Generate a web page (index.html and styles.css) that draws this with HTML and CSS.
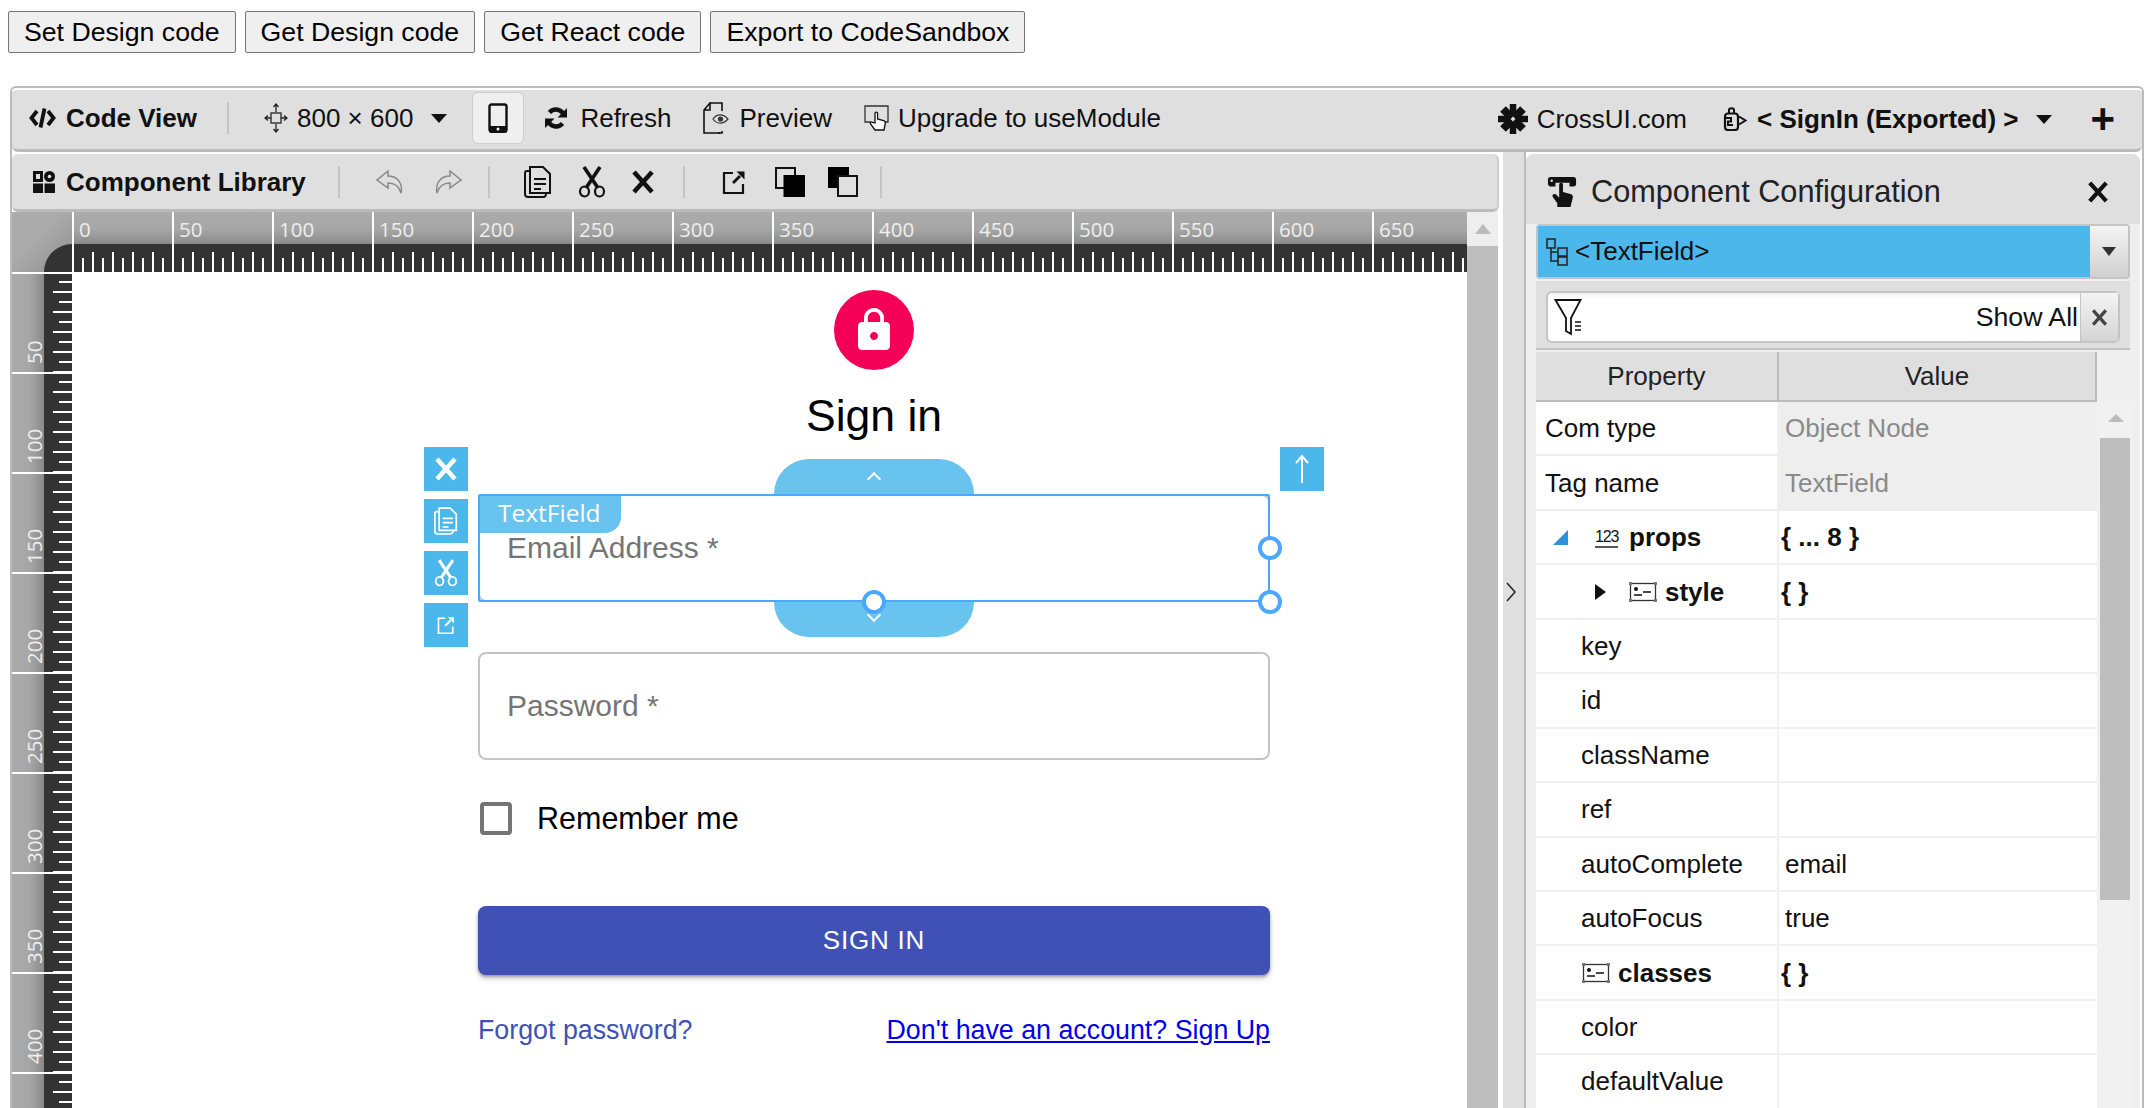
FILE: index.html
```html
<!DOCTYPE html>
<html lang="en">
<head>
    <meta charset="UTF-8">
    <title>CrossUI Builder</title>
    <link rel="stylesheet" href="styles.css">
</head>
<body>
    <svg class="sprite" xmlns="http://www.w3.org/2000/svg">
        <symbol id="i-code" viewBox="0 0 27 24"><path d="M8 5 2.500 12 8 19M19 5l5.500 7-5.500 7M15.500 2.500l-4 19" fill="none" stroke="currentColor" stroke-width="3.800"/></symbol>
        <symbol id="i-move" viewBox="0 0 24 30"><path d="M12 1v8M12 21v8M1 15h6M17 15h6M9.500 4 12 1l2.500 3M9.500 26l2.500 3 2.500-3M4 12.500 1 15l3 2.500M20 12.500l3 2.500-3 2.500" fill="none" stroke="#222" stroke-width="1.300"/><rect x="7" y="10" width="10" height="10" fill="none" stroke="#222" stroke-width="1.300"/></symbol>
        <symbol id="i-phone" viewBox="0 0 20 30"><rect x="1.500" y="1.500" width="17" height="27" rx="2" fill="none" stroke="#111" stroke-width="2.400"/><path d="M1 23h18v5a2 2 0 0 1-2 2H3a2 2 0 0 1-2-2z" fill="#111"/><circle cx="10" cy="26" r="1.500" fill="#fff"/></symbol>
        <symbol id="i-refresh" viewBox="0 0 24 24"><path d="M20 9.500A8.500 8.500 0 0 0 5.500 6.500M4 14.500a8.500 8.500 0 0 0 14.500 3" fill="none" stroke="#111" stroke-width="4.400"/><path d="M23 2v9.500h-9.500zM1 22v-9.500h9.500z" fill="#111"/></symbol>
        <symbol id="i-preview" viewBox="0 0 28 32"><path d="M8 1h12v8M18 31H2V8l6-7v7H2" fill="none" stroke="#111" stroke-width="1.600"/><path d="M20 29v2h-4" fill="none" stroke="#111" stroke-width="1.600"/><path d="M11 17c4-5.500 10-5.500 15 0-5 5.500-11 5.500-15 0z" fill="none" stroke="#333" stroke-width="1.200"/><circle cx="18.500" cy="17" r="2.600" fill="#333"/></symbol>
        <symbol id="i-upgrade" viewBox="0 0 26 26"><path d="M7 17H1V1h23v16h-4" fill="none" stroke="#333" stroke-width="1.300"/><path d="M11 18V8.500a1.300 1.300 0 0 1 2.600 0V14l6 1.500c1.500.5 2 1.500 1.700 3L20 25H11l-4.500-6c-.8-1.500 1-2.500 2-1.500z" fill="#fff" stroke="#111" stroke-width="1.300"/></symbol>
        <symbol id="i-cross" viewBox="0 0 32 32"><g stroke="#111" fill="none"><path d="M16 1v30M1 16h30" stroke-width="6.500"/><path d="M6 6l20 20M26 6 6 26" stroke-width="8"/></g><path d="M16 13.500l2.500 2.500-2.500 2.500-2.500-2.500z" fill="#dfdfdf"/></symbol>
        <symbol id="i-bag" viewBox="0 0 24 24"><path d="M2 10c0-2 1-3.500 3-3.500h7c2 0 3 1.500 3 3.500v10c0 2-1 3-3 3H5c-2 0-3-1-3-3z" fill="none" stroke="#111" stroke-width="2.200"/><path d="M6 6.500V3c0-2.500 5-2.500 5 0v3.500" fill="none" stroke="#111" stroke-width="2"/><path d="M16 9.500l6.500 4-6.500 4M3 11h5v3.500H5V18h5" fill="none" stroke="#111" stroke-width="2"/></symbol>
        <symbol id="i-lib" viewBox="0 0 24 24"><path d="M1 1h10v11H1zM1 13.500h10V23H1zM12.500 13.500H23V23H12.500z" fill="#111"/><rect x="4" y="4" width="4" height="5" fill="#dfdfdf"/><circle cx="17.500" cy="6.500" r="5.500" fill="#111"/><circle cx="17.500" cy="6.500" r="1.800" fill="#dfdfdf"/></symbol>
        <symbol id="i-undo" viewBox="0 0 30 26"><path d="M13 2 2 11l11 8v-5c6 0 11 3 13 10 2-9-3-17-13-17z" fill="none" stroke="#888" stroke-width="1.500"/></symbol>
        <symbol id="i-redo" viewBox="0 0 30 26"><path d="M17 2l11 9-11 8v-5c-6 0-11 3-13 10-2-9 3-17 13-17z" fill="none" stroke="#888" stroke-width="1.500"/></symbol>
        <symbol id="i-paste" viewBox="0 0 28 32"><path d="M6 5H3a2 2 0 0 0-2 2v21a3 3 0 0 0 3 3h15c2 0 3-1 3-3" fill="none" stroke="currentColor" stroke-width="2"/><path d="M6 1h13l7 7v19H6z" fill="none" stroke="currentColor" stroke-width="2"/><path d="M10 13h12M10 18h12M10 23h7" stroke="currentColor" stroke-width="2"/></symbol>
        <symbol id="i-cut" viewBox="0 0 28 32"><path d="M6 1l14 21M22 1 8 22" fill="none" stroke="currentColor" stroke-width="3.600"/><ellipse cx="6.500" cy="25.500" rx="4.500" ry="5" fill="none" stroke="currentColor" stroke-width="2.200"/><ellipse cx="21.500" cy="25.500" rx="4.500" ry="5" fill="none" stroke="currentColor" stroke-width="2.200"/></symbol>
        <symbol id="i-x" viewBox="0 0 24 24"><path d="M3 2l18 20M21 2 3 22" fill="none" stroke="currentColor" stroke-width="4.600"/></symbol>
        <symbol id="i-open" viewBox="0 0 24 24"><path d="M11 3H2v20h19v-9" fill="none" stroke="currentColor" stroke-width="2.200"/><path d="M11 13l7-7" stroke="currentColor" stroke-width="2.800"/><path d="M14.500 1.500h8v8z" fill="currentColor"/></symbol>
        <symbol id="i-front" viewBox="0 0 30 30"><rect x="1" y="1" width="19" height="20" fill="none" stroke="#111" stroke-width="2"/><rect x="8.500" y="8" width="21.500" height="22" fill="#000"/></symbol>
        <symbol id="i-back" viewBox="0 0 30 30"><rect x="0" y="0" width="21" height="21" fill="#000"/><rect x="10" y="9" width="19" height="20" fill="#dfdfdf" stroke="#111" stroke-width="2"/></symbol>
        <symbol id="i-tool" viewBox="0 0 32 32"><path d="M1 3c0-2 1-3 3-3h24c2 0 3 1 3 3v5c0 1-1 2-3 2h-4V6H9v4H4c-2 0-3-1-3-3z" fill="#111"/><circle cx="5" cy="4" r="1.300" fill="#dfdfdf"/><path d="M13 8c0-2 4-2 4 0v8l8 2c2 .5 3 2 2.500 4L25 32H11v-4l-5-7c-1-2 2-4 4-2l3 3z" fill="#111"/></symbol>
        <symbol id="i-tree" viewBox="0 0 22 28"><path d="M1 1h8v9H1zM12 10h9v8h-9zM12 19h9v8h-9z" fill="none" stroke="#222" stroke-width="1.500"/><path d="M5 10v13h7M5 14h7" fill="none" stroke="#222" stroke-width="1.500"/></symbol>
        <symbol id="i-filter" viewBox="0 0 30 38"><path d="M1.500 2h25L17 20v16l-5-3V20z" fill="none" stroke="#111" stroke-width="1.800"/><path d="M21 24h6M21 28h6M21 32h6" stroke="#111" stroke-width="1.600"/></symbol>
        <symbol id="i-num" viewBox="0 0 24 22"><text x="0" y="15" font-family="Liberation Sans, sans-serif" font-size="16" font-weight="normal" letter-spacing="-1.200" fill="#111">123</text><path d="M0 20h23" stroke="#111" stroke-width="1.400"/></symbol>
        <symbol id="i-obj" viewBox="0 0 28 20"><rect x="1.500" y="1.500" width="25" height="17" fill="none" stroke="#333" stroke-width="1.300"/><path d="M0 0h3v3H0zM25 0h3v3h-3zM0 17h3v3H0zM25 17h3v3h-3z" fill="#777"/><circle cx="7" cy="7" r="2" fill="#111"/><path d="M5 13h8M14 10h8" stroke="#111" stroke-width="1.500"/></symbol>
        <symbol id="i-lock" viewBox="0 0 24 24"><path d="M18 8h-1V6c0-2.760-2.240-5-5-5S7 3.240 7 6v2H6c-1.100 0-2 .9-2 2v10c0 1.100.9 2 2 2h12c1.100 0 2-.9 2-2V10c0-1.100-.9-2-2-2zm-6 9c-1.100 0-2-.9-2-2s.9-2 2-2 2 .9 2 2-.9 2-2 2zm3.100-9H8.900V6c0-1.710 1.390-3.100 3.100-3.100 1.710 0 3.100 1.390 3.100 3.100v2z" fill="currentColor"/></symbol>
    </svg>

    <div class="actions">
        <button>Set Design code</button>
        <button>Get Design code</button>
        <button>Get React code</button>
        <button>Export to CodeSandbox</button>
    </div>

    <div class="builder">
        <div class="topbar">
            <svg class="tb-code" width="27" height="24"><use href="#i-code"/></svg>
            <b class="tb-title">Code View</b>
            <span class="tb-sep sep-view"></span>
            <svg class="tb-move" width="24" height="30"><use href="#i-move"/></svg>
            <span class="tb-label">800 × 600</span>
            <span class="caret caret-size"></span>
            <span class="phone-btn"><svg width="20" height="30"><use href="#i-phone"/></svg></span>
            <svg class="tb-refresh" width="24" height="24"><use href="#i-refresh"/></svg>
            <span class="tb-label">Refresh</span>
            <svg class="tb-preview" width="28" height="32"><use href="#i-preview"/></svg>
            <span class="tb-label">Preview</span>
            <svg class="tb-upgrade" width="26" height="26"><use href="#i-upgrade"/></svg>
            <span class="tb-label">Upgrade to useModule</span>
            <div class="tb-right">
                <svg width="32" height="32"><use href="#i-cross"/></svg>
                <span class="tb-label">CrossUI.com</span>
                <svg class="tb-bag" width="24" height="24"><use href="#i-bag"/></svg>
                <b class="tb-file">&lt; SignIn (Exported) &gt;</b>
                <span class="caret caret-file"></span>
                <span class="tb-plus">+</span>
            </div>
        </div>

        <div class="workspace">
            <div class="canvas-col">
                <div class="libbar">
                    <svg width="24" height="24"><use href="#i-lib"/></svg>
                    <b class="tb-title">Component Library</b>
                    <span class="tb-sep sep-lib"></span>
                    <svg class="lb-undo" width="30" height="26"><use href="#i-undo"/></svg>
                    <svg class="lb-redo" width="30" height="26"><use href="#i-redo"/></svg>
                    <span class="tb-sep sep-hist"></span>
                    <svg class="lb-paste" width="28" height="32"><use href="#i-paste"/></svg>
                    <svg class="lb-cut" width="28" height="32"><use href="#i-cut"/></svg>
                    <svg class="lb-x" width="24" height="24"><use href="#i-x"/></svg>
                    <span class="tb-sep sep-edit"></span>
                    <svg class="lb-open" width="24" height="24"><use href="#i-open"/></svg>
                    <svg class="lb-front" width="30" height="30"><use href="#i-front"/></svg>
                    <svg class="lb-back" width="30" height="30"><use href="#i-back"/></svg>
                    <span class="tb-sep sep-order"></span>
                </div>

                <div class="stage">
                    <div class="rulers">
                        <div class="ruler-corner"></div>
                        <div class="ruler-h" id="rulerH"></div>
                        <div class="ruler-v" id="rulerV"></div>
                        <div class="page">
                            <div class="form">
                                <div class="avatar"><svg width="48" height="48"><use href="#i-lock"/></svg></div>
                                <h1 class="form-title">Sign in</h1>

                                <div class="field field-email">
                                    <span class="placeholder">Email Address *</span>
                                    <div class="selection">
                                        <div class="hump hump-top"><span class="chev chev-up"></span></div>
                                        <div class="hump hump-bottom"><span class="chev chev-down"></span></div>
                                        <div class="sel-frame"></div>
                                        <div class="sel-tag">TextField</div>
                                        <div class="sel-tools">
                                            <span class="sel-btn"><svg width="24" height="24"><use href="#i-x"/></svg></span>
                                            <span class="sel-btn"><svg width="24" height="28"><use href="#i-paste"/></svg></span>
                                            <span class="sel-btn"><svg width="24" height="28"><use href="#i-cut"/></svg></span>
                                            <span class="sel-btn"><svg width="18" height="18"><use href="#i-open"/></svg></span>
                                        </div>
                                        <span class="sel-btn sel-up">
                                            <svg width="16" height="30" viewBox="0 0 16 30"><path d="M8 29V2M2 9l6-7 6 7" fill="none" stroke="currentColor" stroke-width="2"/></svg>
                                        </span>
                                        <span class="handle handle-right"></span>
                                        <span class="handle handle-corner"></span>
                                        <span class="handle handle-bottom"></span>
                                    </div>
                                </div>

                                <div class="field field-pass">
                                    <span class="placeholder">Password *</span>
                                </div>

                                <label class="remember"><span class="checkbox"></span>Remember me</label>

                                <div class="submit">SIGN IN</div>

                                <div class="links">
                                    <a class="link-forgot">Forgot password?</a>
                                    <a class="link-signup" href="#">Don't have an account? Sign Up</a>
                                </div>
                            </div>
                        </div>
                    </div>
                    <div class="vscroll">
                        <span class="vscroll-up"></span>
                    </div>
                </div>
            </div>

            <div class="splitter">
                <svg width="12" height="22" viewBox="0 0 12 22"><path d="M2 2l8 9-8 9" fill="none" stroke="#222" stroke-width="1.500"/></svg>
            </div>

            <div class="panel">
                <div class="panel-head">
                    <svg width="30" height="30"><use href="#i-tool"/></svg>
                    <span class="panel-title">Component Configuration</span>
                    <svg class="panel-close" width="22" height="22"><use href="#i-x"/></svg>
                </div>
                <div class="combo">
                    <div class="combo-value">
                        <svg width="22" height="28"><use href="#i-tree"/></svg>
                        <span>&lt;TextField&gt;</span>
                    </div>
                    <div class="combo-btn"><span class="caret"></span></div>
                </div>
                <div class="filter">
                    <div class="filter-box">
                        <svg width="30" height="38"><use href="#i-filter"/></svg>
                        <span class="filter-text">Show All</span>
                        <span class="filter-clear"><svg width="17" height="17"><use href="#i-x"/></svg></span>
                    </div>
                </div>
                <div class="grid-head">
                    <div class="grid-th th-prop">Property</div>
                    <div class="grid-th th-value">Value</div>
                </div>
                <div class="grid-body">
                    <div class="rows">
                        <div class="row row-ro"><div class="cell-p">Com type</div><div class="cell-v">Object Node</div></div>
                        <div class="row row-ro"><div class="cell-p">Tag name</div><div class="cell-v">TextField</div></div>
                        <div class="row row-group">
                            <div class="cell-p indent-props"><span class="tri-open"></span><svg class="ic-num" width="24" height="22"><use href="#i-num"/></svg>props</div>
                            <div class="cell-v">{ ... 8 }</div>
                        </div>
                        <div class="row row-group">
                            <div class="cell-p indent-style"><span class="tri-closed"></span><svg class="ic-obj" width="28" height="20"><use href="#i-obj"/></svg>style</div>
                            <div class="cell-v">{ }</div>
                        </div>
                        <div class="row"><div class="cell-p indent">key</div><div class="cell-v"></div></div>
                        <div class="row"><div class="cell-p indent">id</div><div class="cell-v"></div></div>
                        <div class="row"><div class="cell-p indent">className</div><div class="cell-v"></div></div>
                        <div class="row"><div class="cell-p indent">ref</div><div class="cell-v"></div></div>
                        <div class="row"><div class="cell-p indent">autoComplete</div><div class="cell-v">email</div></div>
                        <div class="row"><div class="cell-p indent">autoFocus</div><div class="cell-v">true</div></div>
                        <div class="row row-group">
                            <div class="cell-p indent-classes"><svg class="ic-obj" width="28" height="20"><use href="#i-obj"/></svg>classes</div>
                            <div class="cell-v">{ }</div>
                        </div>
                        <div class="row"><div class="cell-p indent">color</div><div class="cell-v"></div></div>
                        <div class="row"><div class="cell-p indent">defaultValue</div><div class="cell-v"></div></div>
                    </div>
                    <div class="grid-scroll">
                        <span class="grid-scroll-up"></span>
                        <span class="grid-scroll-thumb"></span>
                    </div>
                </div>
            </div>
        </div>
    </div>

    <script>
        // ruler numbers every 50 units, 100px apart
        const rulerH = document.getElementById('rulerH');
        for (let n = 0; n <= 650; n += 50) {
            const cell = document.createElement('span');
            cell.textContent = n;
            rulerH.appendChild(cell);
        }
        const rulerV = document.getElementById('rulerV');
        for (let n = 50; n <= 400; n += 50) {
            const cell = document.createElement('span');
            cell.textContent = n;
            rulerV.appendChild(cell);
        }
    </script>
</body>
</html>
```
FILE: styles.css
```css
* {
    box-sizing: border-box;
}
html, body {
    height: 1108px;
    overflow: hidden;
}
body {
    margin: 0;
    background: #fff;
    color: #111;
    font-family: "Liberation Sans", Arial, sans-serif;
    font-size: 26px;
}
svg {
    display: block;
    flex: none;
}
.sprite {
    display: none;
}

/* top action buttons */
.actions {
    display: flex;
    gap: 9px;
    padding: 11px 8px 0;
}
.actions button {
    height: 42px;
    padding: 0 15px;
    border: 1px solid #767676;
    border-radius: 2px;
    background: #efefef;
    color: #000;
    font-family: inherit;
    font-size: 26.67px;
}

/* builder frame */
.builder {
    height: 1025px;
    margin: 33px 10px 0 10px;
    border: 2px solid #bbb;
    border-bottom: 0;
    border-radius: 6px 6px 0 0;
    padding-top: 2px;
}
.topbar {
    display: flex;
    align-items: center;
    height: 62px;
    padding: 0 0 3px 17px;
    background: #dfdfdf;
    border-bottom: 3px solid #bbb;
    border-radius: 4px 4px 6px 6px;
}
.tb-title {
    margin-left: 10px;
}
.tb-sep {
    width: 2px;
    height: 32px;
    background: #c4c4c4;
}
.sep-view { margin-left: 30px; }
.tb-move { margin-left: 35px; }
.tb-move + .tb-label { margin-left: 9px; }
.caret {
    display: block;
    width: 0;
    height: 0;
    border-left: 8px solid transparent;
    border-right: 8px solid transparent;
    border-top: 9px solid #111;
}
.caret-size { margin-left: 18px; }
.phone-btn {
    display: flex;
    align-items: center;
    justify-content: center;
    width: 52px;
    height: 52px;
    margin-left: 25px;
    background: #efefef;
    border: 1px solid #ccc;
    border-radius: 6px;
}
.tb-refresh { margin-left: 20px; }
.tb-refresh + .tb-label { margin-left: 12px; }
.tb-preview { margin-left: 31px; }
.tb-preview + .tb-label { margin-left: 9px; }
.tb-upgrade { margin-left: 32px; }
.tb-upgrade + .tb-label { margin-left: 8px; }
.tb-right {
    display: flex;
    align-items: center;
    margin: 2px 0 0 auto;
    padding-right: 27px;
}
.tb-right svg + .tb-label { margin-left: 8px; }
.tb-bag { margin-left: 36px; }
.tb-file { margin-left: 10px; }
.caret-file { margin-left: 18px; }
.tb-plus {
    margin-left: 38px;
    font-size: 42px;
    font-weight: bold;
    line-height: 1;
}

.workspace {
    display: flex;
    height: 960px;
}
.canvas-col {
    width: 1487px;
    flex: none;
}
.libbar {
    display: flex;
    align-items: center;
    height: 58px;
    margin-top: 2px;
    padding-left: 20px;
    background: #dfdfdf;
    border-bottom: 3px solid #bbb;
    border-right: 2px solid #ccc;
    border-radius: 6px 6px 6px 6px;
}
.libbar .tb-title { padding-top: 2px; }
.sep-lib { margin-left: 32px; }
.lb-undo { margin-left: 35px; }
.lb-redo { margin-left: 28px; }
.sep-hist { margin-left: 25px; }
.lb-paste { margin-left: 34px; }
.lb-cut { margin-left: 26px; }
.lb-x { margin-left: 25px; }
.sep-edit { margin-left: 28px; }
.lb-open { margin-left: 37px; }
.lb-front { margin-left: 29px; }
.lb-back { margin-left: 23px; }
.sep-order { margin-left: 22px; }

/* canvas with rulers */
.stage {
    display: flex;
    height: 900px;
}
.rulers {
    display: grid;
    grid-template-columns: 60px 1395px;
    grid-template-rows: 60px 1fr;
    width: 1455px;
    flex: none;
    overflow: hidden;
}
.ruler-corner {
    position: relative;
    background: linear-gradient(135deg, #ababab 40%, #8f8f8f 100%);
}
.ruler-corner::after {
    content: "";
    position: absolute;
    right: 0;
    bottom: 0;
    width: 28px;
    height: 28px;
    background: #333;
    border-top-left-radius: 28px;
}
.ruler-h {
    display: flex;
    background-color: #333;
    background-image:
        linear-gradient(90deg, #fff 2px, transparent 2px),
        linear-gradient(90deg, #fff 2px, transparent 2px),
        linear-gradient(#ababab 0, #a6a6a6 55%, #8a8a8a 100%);
    background-size: 20px 20px, 20px 14px, 100% 32px;
    background-position: 20px bottom, 10px bottom, top;
    background-repeat: repeat-x, repeat-x, no-repeat;
}
.ruler-h span {
    flex: none;
    width: 100px;
    height: 60px;
    padding: 4px 0 0 5px;
    border-left: 2px solid #fff;
    color: #eee;
    font-family: "Open Sans", sans-serif;
    font-size: 20.500px;
    line-height: 26px;
}
.ruler-v {
    border-top: 2px solid #fff;
    background-color: #333;
    background-image:
        linear-gradient(#fff 2px, transparent 2px),
        linear-gradient(#fff 2px, transparent 2px),
        linear-gradient(90deg, #ababab 0, #a6a6a6 55%, #8a8a8a 100%);
    background-size: 19px 20px, 13px 20px, 32px 100%;
    background-position: right 17px, right 7px, left;
    background-repeat: repeat-y, repeat-y, no-repeat;
}
.ruler-v span {
    display: block;
    width: 60px;
    height: 100px;
    padding: 8px 9px 0 0;
    border-top: 2px solid #fff;
    color: #eee;
    font-family: "Open Sans", sans-serif;
    font-size: 20.500px;
    line-height: 26px;
    text-align: left;
    writing-mode: vertical-rl;
    transform: rotate(180deg);
}
.page {
    background: #fff;
    overflow: hidden;
}
.form {
    width: 792px;
    margin-left: 406px;
    padding-top: 18px;
}
.avatar {
    display: flex;
    align-items: center;
    justify-content: center;
    width: 80px;
    height: 80px;
    margin: 0 auto;
    border-radius: 50%;
    background: #f50057;
    color: #fff;
}
.form-title {
    height: 56px;
    margin: 18px 0 50px;
    color: #000;
    font-size: 44.500px;
    font-weight: normal;
    line-height: 56px;
    text-align: center;
}
.field {
    position: relative;
    display: flex;
    align-items: center;
    height: 108px;
    padding-left: 27px;
    border: 2px solid #c4c4c4;
    border-radius: 8px;
}
.field-pass {
    margin-top: 50px;
}
.placeholder {
    color: #757575;
    font-size: 30px;
}
.remember {
    display: flex;
    align-items: center;
    height: 34px;
    margin-top: 41px;
    color: #000;
    font-size: 30.500px;
}
.checkbox {
    width: 32px;
    height: 33px;
    margin: 0 25px 0 2px;
    border: 4px solid #757575;
    border-radius: 4px;
}
.submit {
    height: 69px;
    margin-top: 71px;
    border-radius: 8px;
    background: #3f51b5;
    box-shadow: 0 2px 3px rgba(0, 0, 0, .3), 0 4px 6px rgba(0, 0, 0, .14);
    color: #fff;
    font-size: 26px;
    letter-spacing: .8px;
    line-height: 69px;
    text-align: center;
}
.links {
    display: flex;
    justify-content: space-between;
    margin-top: 40px;
    font-size: 26.800px;
    line-height: 30px;
}
.link-forgot {
    color: #3f51b5;
}
.link-signup {
    color: #00e;
}

/* selection overlay on the text field */
.selection {
    position: absolute;
    inset: -2px;
}
.sel-frame {
    position: absolute;
    inset: 0;
    border: 2px solid #4aa8ff;
    border-radius: 2px;
}
.hump {
    position: absolute;
    left: 296px;
    width: 200px;
    height: 35px;
    background: #68c3ee;
}
.hump-top {
    top: -35px;
    border-radius: 36px 36px 0 0;
}
.hump-bottom {
    bottom: -35px;
    border-radius: 0 0 36px 36px;
}
.chev {
    position: absolute;
    left: 95px;
    width: 10px;
    height: 10px;
    border-left: 2px solid #fff;
    border-top: 2px solid #fff;
}
.chev-up {
    top: 15px;
    transform: rotate(45deg);
}
.chev-down {
    bottom: 17px;
    transform: rotate(225deg);
}
.sel-tag {
    position: absolute;
    left: 2px;
    top: 2px;
    width: 141px;
    height: 37px;
    padding-left: 18px;
    border-bottom-right-radius: 16px;
    background: #68c3ee;
    color: #fff;
    font-family: "Open Sans", sans-serif;
    font-size: 24.500px;
    line-height: 34px;
}
.sel-tools {
    position: absolute;
    left: -54px;
    top: -47px;
    display: flex;
    flex-direction: column;
    gap: 8px;
}
.sel-btn {
    display: flex;
    align-items: center;
    justify-content: center;
    width: 44px;
    height: 44px;
    background: #4cb7ea;
    color: #fff;
}
.sel-up {
    position: absolute;
    right: -54px;
    top: -47px;
}
.handle {
    position: absolute;
    width: 24px;
    height: 24px;
    border: 4px solid #4aa8ff;
    border-radius: 50%;
    background: #fff;
}
.handle-right {
    right: -12px;
    top: 42px;
}
.handle-corner {
    right: -12px;
    bottom: -12px;
}
.handle-bottom {
    left: 384px;
    bottom: -12px;
}

.vscroll {
    position: relative;
    width: 31px;
    flex: none;
    background: #bebebe;
    margin-left: 0;
}
.vscroll-up {
    display: flex;
    align-items: center;
    justify-content: center;
    height: 34px;
    background: #eee;
}
.vscroll-up::before {
    content: "";
    border-left: 8px solid transparent;
    border-right: 8px solid transparent;
    border-bottom: 10px solid #bbb;
}

.splitter {
    display: flex;
    align-items: center;
    justify-content: flex-start;
    box-sizing: content-box;
    width: 19px;
    height: 880px;
    flex: none;
    margin-left: 4px;
    padding: 0 0 80px 2px;
    background: #dfdfdf;
    border-right: 2px solid #bbb;
}

/* configuration panel */
.panel {
    width: 614px;
    flex: none;
    margin-top: 2px;
    background: #efefef;
    border-radius: 8px 8px 0 0;
    overflow: hidden;
}
.panel-head {
    display: flex;
    align-items: center;
    height: 70px;
    padding: 6px 31px 0 21px;
    background: #dfdfdf;
}
.panel-title {
    margin-left: 14px;
    color: #222;
    font-size: 30.700px;
}
.panel-close {
    margin-left: auto;
}
.combo {
    display: flex;
    height: 55px;
    margin: 0 10px;
    border: 2px solid #c4c4c4;
    border-radius: 4px;
    background: #dfdfdf;
}
.combo-value {
    display: flex;
    align-items: center;
    flex: 1;
    gap: 7px;
    padding-left: 8px;
    background: #4cb7ea;
}
.combo-btn {
    display: flex;
    align-items: center;
    justify-content: center;
    width: 38px;
    background: linear-gradient(#f4f4f4, #d0d0d0);
}
.combo-btn .caret {
    border-left-width: 7px;
    border-right-width: 7px;
    border-top-color: #333;
}
.filter {
    height: 69px;
    margin: 2px 10px 0;
    padding: 10px 10px 0;
    background: #dfdfdf;
    border-bottom: 2px solid #c4c4c4;
}
.filter-box {
    display: flex;
    align-items: center;
    height: 52px;
    padding-left: 6px;
    border: 2px solid #c4c4c4;
    border-radius: 6px;
    background: linear-gradient(#f2f2f2, #fff 14%);
}
.filter-text {
    margin-left: auto;
    margin-right: 2px;
    font-size: 26.700px;
}
.filter-clear {
    display: flex;
    align-items: center;
    justify-content: center;
    width: 38px;
    height: 48px;
    border-left: 1px solid #c4c4c4;
    background: linear-gradient(#f4f4f4, #d4d4d4);
    color: #444;
}
.grid-head {
    display: flex;
    height: 50px;
    margin: 2px 0 0 10px;
}
.grid-th {
    height: 50px;
    background: #dfdfdf;
    border-bottom: 2px solid #bbb;
    color: #222;
    line-height: 48px;
    text-align: center;
}
.th-prop {
    width: 243px;
    border-right: 2px solid #bbb;
}
.th-value {
    width: 318px;
    border-right: 2px solid #bbb;
}
.grid-body {
    display: flex;
    margin-left: 10px;
}
.rows {
    width: 561px;
    flex: none;
    background: #fff;
}
.row {
    display: flex;
    height: 54.450px;
    border-bottom: 2px solid #f0f0f0;
}
.cell-p {
    display: flex;
    align-items: center;
    width: 243px;
    flex: none;
    padding: 1px 0 0 9px;
    border-right: 2px solid #f0f0f0;
}
.cell-v {
    display: flex;
    align-items: center;
    flex: 1;
    padding: 1px 0 0 6px;
}
.row-ro {
    border-bottom-color: #eee;
}
.row-ro .cell-v {
    background: #eee;
    color: #8a8a8a;
}
.row-group {
    font-weight: bold;
}
.row-group .cell-v {
    padding-left: 2px;
}
.indent {
    padding-left: 45px;
}
.indent-props {
    padding-left: 17px;
}
.indent-style {
    padding-left: 59px;
}
.indent-classes {
    padding-left: 46px;
}
.tri-open {
    width: 0;
    height: 0;
    border-bottom: 15px solid #2f8fd8;
    border-left: 15px solid transparent;
    margin-right: 27px;
}
.tri-closed {
    width: 0;
    height: 0;
    border-top: 8px solid transparent;
    border-bottom: 8px solid transparent;
    border-left: 11px solid #111;
    margin-right: 23px;
}
.ic-num {
    margin-right: 10px;
}
.ic-obj {
    margin-right: 8px;
}
.grid-scroll {
    position: relative;
    width: 36px;
    height: 710px;
    background: #f1f1f1;
}
.grid-scroll-up {
    display: block;
    width: 0;
    margin: 12px 0 0 11px;
    border-left: 8px solid transparent;
    border-right: 8px solid transparent;
    border-bottom: 8px solid #bbb;
}
.grid-scroll-thumb {
    display: block;
    width: 30px;
    height: 462px;
    margin: 16px 0 0 3px;
    background: #bebebe;
}
```
